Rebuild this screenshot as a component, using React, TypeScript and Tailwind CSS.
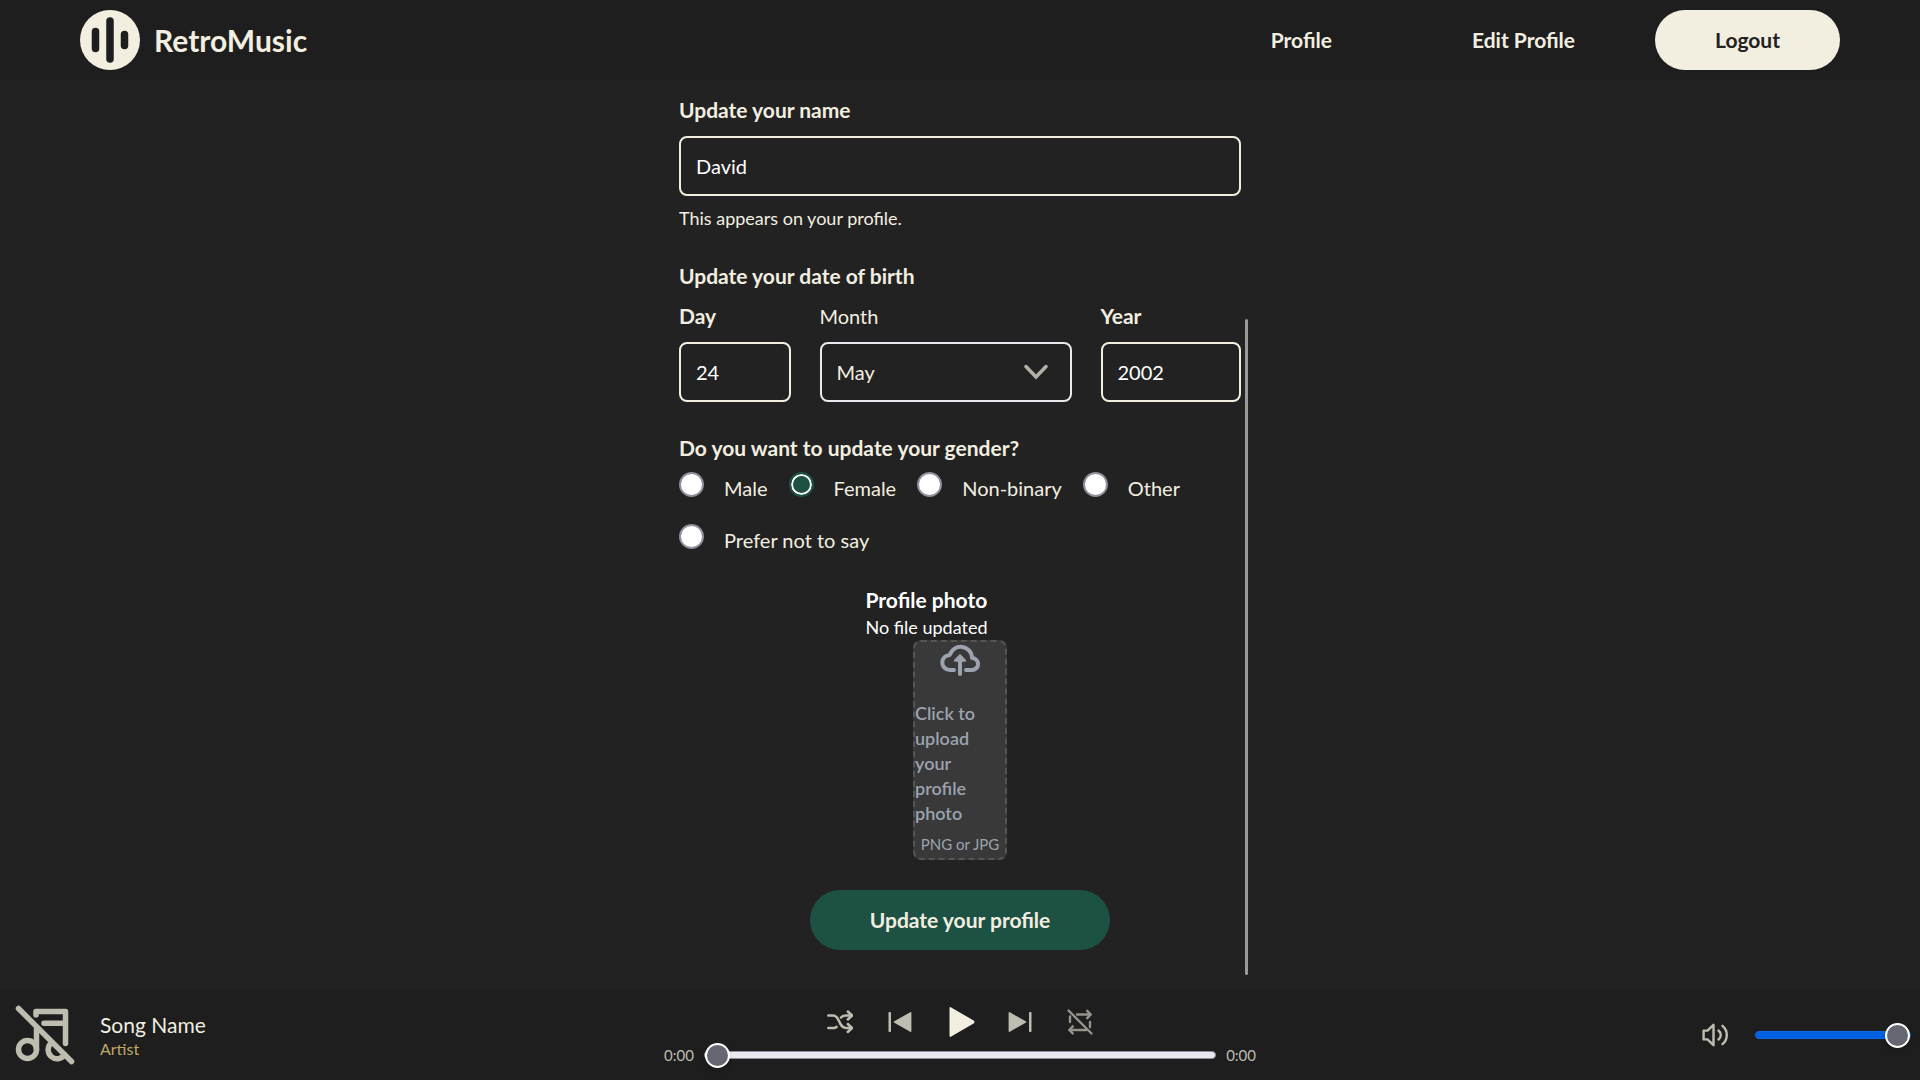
import { useState } from "react";
import type { InputHTMLAttributes, ReactNode } from "react";

const GENDERS = ["Male", "Female", "Non-binary", "Other", "Prefer not to say"];
const MONTHS = [
  "January", "February", "March", "April", "May", "June",
  "July", "August", "September", "October", "November", "December",
];

function Logo() {
  return (
    <svg viewBox="0 0 60 60" className="size-15" aria-hidden="true">
      <circle cx="30" cy="30" r="30" fill="#f2eee0" />
      <g stroke="#1e1e1e" strokeLinecap="round">
        <path d="M15.5 21.5v17" strokeWidth="7.5" />
        <path d="M30 11v38" strokeWidth="7.5" />
        <path d="M44.5 24.5v11" strokeWidth="7.5" />
      </g>
    </svg>
  );
}

function MusicOffIcon() {
  return (
    <svg viewBox="0 0 60 60" className="size-15 text-[#bfbcb0]" fill="none" stroke="currentColor" strokeLinecap="round" strokeLinejoin="round" aria-hidden="true">
      <circle cx="12.5" cy="44.5" r="9" strokeWidth="5.5" />
      <path d="M21.500 44.500V23" strokeWidth="5.500" />
      <path d="M21 10V6.500H50.500V38.500M29 18.300H50" strokeWidth="5.500" />
      <path d="M36.200 38a9 9 0 1 0 13.400 11.800" strokeWidth="5.500" />
      <path d="M3.500 3.500 56.500 56.500" strokeWidth="5.500" />
    </svg>
  );
}

function CloudUploadIcon() {
  return (
    <svg viewBox="0 0 40 34" className="h-[34px] w-10 text-[#9ca3af]" fill="none" stroke="currentColor" strokeWidth="4" strokeLinecap="round" strokeLinejoin="round" aria-hidden="true">
      <path d="M14 28H9.800a7.500 7.500 0 0 1 0-15.100 11.400 11.400 0 0 1 22.300 3.100 6 6 0 0 1-.100 12H26" />
      <path d="M20 32V16" />
      <path d="M20 13.500 24.800 18.500H15.200Z" strokeWidth="2.500" fill="currentColor" />
    </svg>
  );
}

function ShuffleIcon() {
  return (
    <svg viewBox="0 0 26 24" className="h-6 w-[26px]" fill="none" stroke="currentColor" strokeWidth="2.500" strokeLinecap="round" strokeLinejoin="round" aria-hidden="true">
      <path d="M1.300 5.500H6C13.500 5.500 11 18 19 18H25M1.300 18H6.500Q8.500 18 9.600 16.800M14 7.500Q15.500 5.500 18.500 5.500H25" />
      <path d="M20.800 1.500 25 5.500 20.800 9.500M20.800 14 25 18 20.800 22" />
    </svg>
  );
}

function PreviousIcon() {
  return (
    <svg viewBox="0 0 24 24" className="size-6" fill="currentColor" aria-hidden="true">
      <path d="M.5 2.800q0-.8.8-.8h.9q.8 0 .8.800v18.400q0 .8-.8.800h-.9q-.8 0-.8-.8zM6.300 11.300 22.200 2.200q1.200-.6 1.200.8v18q0 1.400-1.200.8L6.300 12.700q-1.200-.7 0-1.400z" />
    </svg>
  );
}

function NextIcon() {
  return (
    <svg viewBox="0 0 24 24" className="size-6" fill="currentColor" aria-hidden="true">
      <path d="M21 2.800q0-.8.8-.8h.9q.8 0 .8.800v18.400q0 .8-.8.800h-.9q-.8 0-.8-.8zM17.700 11.300 1.800 2.200Q.6 1.600.6 3v18q0 1.400 1.200.8l15.900-9.100q1.200-.7 0-1.400z" />
    </svg>
  );
}

function PlayIcon() {
  return (
    <svg viewBox="0 0 26 30" className="h-[30px] w-[26px] text-[#f2eee0]" fill="currentColor" aria-hidden="true">
      <path d="M.5 1.200Q.5-.6 2.200.4L24.600 13.500q1.900 1.500 0 3L2.200 29.600q-1.700 1-1.700-.8z" />
    </svg>
  );
}

function RepeatOffIcon() {
  return (
    <svg viewBox="0 0 26 26" className="size-[26px] text-[#96938b]" fill="none" stroke="currentColor" strokeWidth="2.400" strokeLinecap="round" strokeLinejoin="round" aria-hidden="true">
      <path d="M1.500 1.500 24.500 24.500" />
      <path d="M10 5.500H23.500M20.200 1.800 23.800 5.500 20.200 9.200" />
      <path d="M23 13V18M3 13V7.500" />
      <path d="M19 21H2.500M5.800 17.300 2.200 21 5.800 24.500" />
    </svg>
  );
}

function VolumeIcon() {
  return (
    <svg viewBox="0 0 26 24" className="h-6 w-[26px]" fill="none" stroke="currentColor" strokeWidth="2.400" strokeLinecap="round" strokeLinejoin="round" aria-hidden="true">
      <path d="M1.600 7.600H5.500L11.500 1.800V22.200L5.500 16.400H1.600Z" />
      <path d="M16.500 7.500Q18.800 9.500 18.800 12T16.500 16.500M20.500 2.800Q24.800 6.500 24.800 12T20.500 21.200" />
    </svg>
  );
}

function Field({ id, label, className, ...input }: { id: string; label: string; className: string } & InputHTMLAttributes<HTMLInputElement>) {
  return (
    <div className={className}>
      <label htmlFor={id} className="block text-[21px] leading-7 font-bold">{label}</label>
      <input
        id={id}
        {...input}
        className="mt-3 block h-15 w-full rounded-lg border-2 border-[#f2eee0] bg-transparent px-[15px] text-white outline-none"
      />
    </div>
  );
}

function NavLink({ children }: { children: ReactNode }) {
  return (
    <a href="#" className="flex h-15 items-center px-15 text-[21px] font-bold">
      {children}
    </a>
  );
}

function Slider({ label, initial, track }: { label: string; initial: number; track: string }) {
  const [value, setValue] = useState(initial);
  return (
    <input
      type="range"
      aria-label={label}
      min={0}
      max={100}
      value={value}
      onChange={(e) => setValue(Number(e.target.value))}
      className={
        "h-2 min-w-0 flex-1 appearance-none rounded-full border [&::-webkit-slider-thumb]:size-[25px] [&::-webkit-slider-thumb]:appearance-none [&::-webkit-slider-thumb]:rounded-full [&::-webkit-slider-thumb]:border-2 [&::-webkit-slider-thumb]:border-solid [&::-webkit-slider-thumb]:border-white [&::-webkit-slider-thumb]:bg-[#676774] [&::-webkit-slider-thumb]:shadow-md " +
        track
      }
    />
  );
}

export default function App() {
  const [gender, setGender] = useState("Female");

  return (
    <div className="flex min-h-screen flex-col bg-[#222222] font-['Lato',sans-serif] text-xl leading-7 text-[#f2eee0]">
      <header className="flex h-20 items-center justify-between bg-[#1e1e1e] px-20">
        <a href="#" className="flex items-center gap-3.5 text-3xl font-bold">
          <Logo />
          RetroMusic
        </a>
        <nav className="flex items-center gap-5">
          <NavLink>Profile</NavLink>
          <NavLink>Edit Profile</NavLink>
          <button type="button" className="h-15 rounded-full bg-[#f2eee0] px-15 text-[21px] font-bold text-[#222222]">
            Logout
          </button>
        </nav>
      </header>

      <main className="mx-auto flex w-[30%] flex-1 pl-[7px]">
        <form className="flex min-w-0 flex-1 flex-col pt-4 pb-10" onSubmit={(e) => e.preventDefault()}>
          <Field id="name" label="Update your name" className="w-full" defaultValue="David" />
          <p className="mt-2.5 text-lg leading-6">This appears on your profile.</p>

          <fieldset className="mt-8">
            <legend className="text-[21px] leading-7 font-bold">Update your date of birth</legend>
            <div className="mt-3 flex justify-between">
              <Field id="day" label="Day" className="w-1/5" defaultValue="24" />
              <div className="w-[45%]">
                <label htmlFor="month" className="block">Month</label>
                <div className="relative mt-3">
                  <select
                    id="month"
                    defaultValue="May"
                    className="block h-15 w-full appearance-none rounded-lg border-2 border-[#e9e9f0] bg-transparent px-[15px] outline-none"
                  >
                    {MONTHS.map((m) => (
                      <option key={m} className="bg-[#222222]">{m}</option>
                    ))}
                  </select>
                  <svg viewBox="0 0 24 16" className="pointer-events-none absolute top-[22px] right-6 h-4 w-6" fill="none" stroke="#b3b0a5" strokeWidth="3.500" strokeLinecap="round" aria-hidden="true">
                    <path d="M2 2.500 12 13 22 2.500" />
                  </svg>
                </div>
              </div>
              <Field id="year" label="Year" className="w-1/4" defaultValue="2002" />
            </div>
          </fieldset>

          <fieldset className="mt-8">
            <legend className="text-[21px] leading-7 font-bold">Do you want to update your gender?</legend>
            <div className="mt-3 flex flex-wrap gap-x-[21px] gap-y-6">
              {GENDERS.map((g) => (
                <label key={g} className="flex h-7 items-end gap-5">
                  <input
                    type="radio"
                    name="gender"
                    checked={gender === g}
                    onChange={() => setGender(g)}
                    className="mb-[5px] size-[25px] appearance-none rounded-full border-2 border-[#8f8f9d] bg-white checked:border-[#1c5144] checked:bg-[#1c5144] checked:inset-ring-2 checked:inset-ring-white"
                  />
                  {g}
                </label>
              ))}
            </div>
          </fieldset>

          <section className="mt-8 flex flex-col items-center">
            <div className="mr-[67px] text-white">
              <h2 className="text-[21px] leading-7 font-bold">Profile photo</h2>
              <p className="text-lg leading-[26px]">No file updated</p>
            </div>
            <label className="flex w-[94px] cursor-pointer flex-col items-center rounded-lg border-2 border-dashed border-[#555555] bg-[#393939] text-[#9ca3af]">
              <CloudUploadIcon />
              <span className="mt-[25px] w-full text-lg leading-[25px] font-semibold">Click to upload your profile photo</span>
              <span className="mt-2 mb-1 text-[15px] leading-5">PNG or JPG</span>
              <input type="file" accept="image/png,image/jpeg" className="sr-only" />
            </label>
          </section>

          <button type="submit" className="mt-[30px] h-15 w-[300px] self-center rounded-full bg-[#1c5144] text-[21px] font-bold">
            Update your profile
          </button>
        </form>
        <div className="ml-1 flex w-[3px] flex-col justify-end pb-[15px]" aria-hidden="true">
          <div className="h-[73.3%] rounded-full bg-[#999999]" />
        </div>
      </main>

      <footer className="grid h-[90px] grid-cols-[1fr_592px_1fr] items-center bg-[#1e1e1e] text-[#bfbcb0]">
        <div className="flex items-center gap-[25px] pl-[15px]">
          <MusicOffIcon />
          <div>
            <p className="text-[21px] leading-7 text-[#f2eee0]">Song Name</p>
            <p className="text-base leading-5 text-[#bfa866]">Artist</p>
          </div>
        </div>
        <div className="pt-1">
          <div className="flex h-[34px] items-center justify-center">
            <button type="button" aria-label="Shuffle" className="flex w-15 justify-center"><ShuffleIcon /></button>
            <button type="button" aria-label="Previous" className="flex w-15 justify-center"><PreviousIcon /></button>
            <button type="button" aria-label="Play" className="flex w-15 justify-center pl-1"><PlayIcon /></button>
            <button type="button" aria-label="Next" className="flex w-15 justify-center"><NextIcon /></button>
            <button type="button" aria-label="Repeat off" className="flex w-15 justify-center"><RepeatOffIcon /></button>
          </div>
          <div className="mt-0.5 flex items-center gap-2.5 text-[15px] leading-7">
            <span>0:00</span>
            <Slider label="Seek" initial={0} track="border-[#8f8f9d] bg-[#e9e9f0]" />
            <span>0:00</span>
          </div>
        </div>
        <div className="flex items-center justify-end gap-[27px] pr-[9px]">
          <button type="button" aria-label="Mute"><VolumeIcon /></button>
          <div className="flex w-[156px]">
            <Slider label="Volume" initial={100} track="border-[#0a68ee] bg-[#0060df]" />
          </div>
        </div>
      </footer>
    </div>
  );
}
